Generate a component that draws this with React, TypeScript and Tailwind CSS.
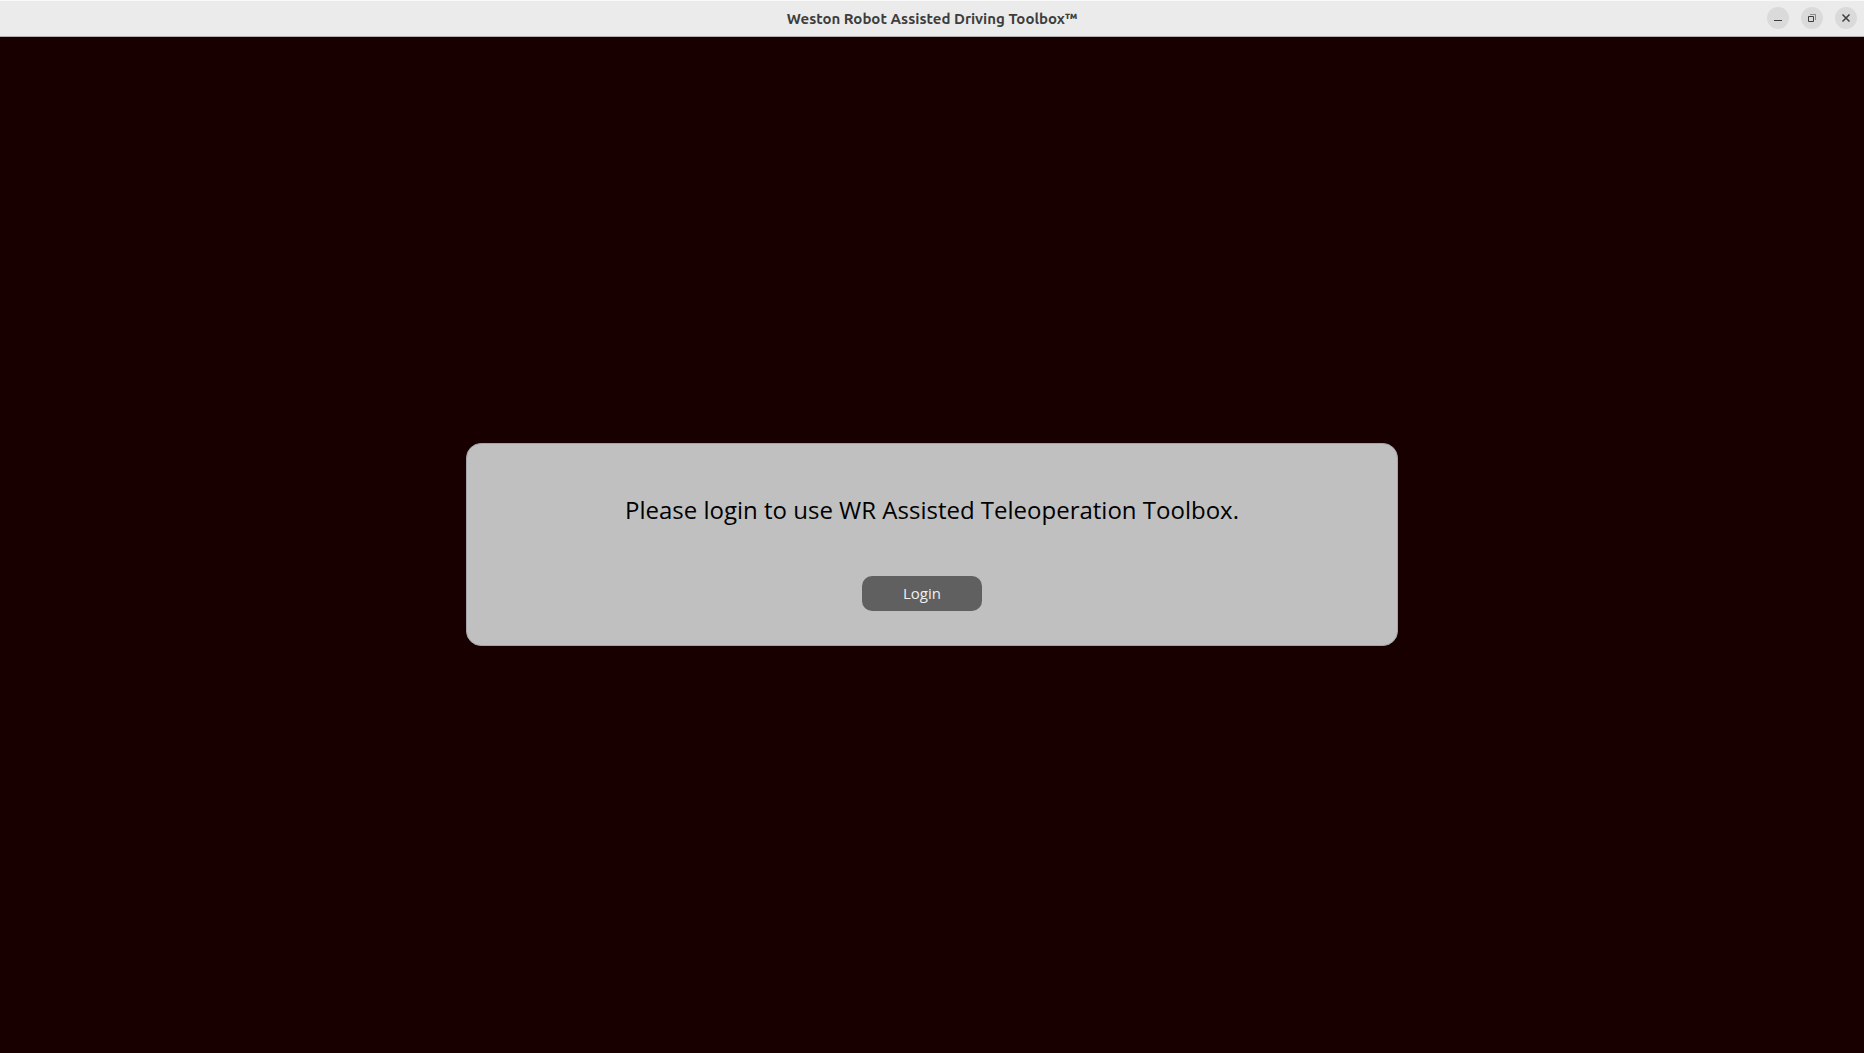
import React from "react";

type WindowButtonProps = { label: string; children: React.ReactNode };

function WindowButton({ label, children }: WindowButtonProps) {
  return (
    <button
      type="button"
      aria-label={label}
      className="flex size-[22px] items-center justify-center rounded-full bg-[#dadada] text-[#3d3d3d]"
    >
      <svg width="16" height="16" viewBox="0 0 16 16" fill="none" stroke="currentColor">
        {children}
      </svg>
    </button>
  );
}

function TitleBar() {
  return (
    <header className="grid h-[37px] shrink-0 grid-cols-[1fr_auto_1fr] items-start border-t border-b border-t-[#f9f9f9] border-b-[#b0b0b0] bg-[#ebebeb] px-[7px] pt-1.5">
      <h1 className="col-start-2 font-['Ubuntu','Noto_Sans',sans-serif] text-[15px] leading-6 font-bold text-[#3d3d3d]">
        Weston Robot Assisted Driving Toolbox™
      </h1>
      <div className="flex justify-end gap-3">
        <WindowButton label="Minimize">
          <path d="M4 10.5h8" />
        </WindowButton>
        <WindowButton label="Restore">
          <path d="M4.5 6.5h5v5h-5z" />
          <path d="M6 4.5h5.5V10" opacity="0.5" />
        </WindowButton>
        <WindowButton label="Close">
          <path d="M4.5 4.5l7 7M11.5 4.5l-7 7" strokeWidth="1.5" />
        </WindowButton>
      </div>
    </header>
  );
}

export default function App() {
  return (
    <div className="flex min-h-screen flex-col bg-[#190000]">
      <TitleBar />
      <main className="flex grow items-center justify-center pb-0.5 font-['Open_Sans','Noto_Sans',sans-serif]">
        <section className="flex w-1/2 flex-col items-center gap-[50px] rounded-[15px] border border-[#a3a3ad] bg-[#c0c0c0] pt-[50px] pb-[34px]">
          <p className="text-2xl leading-8 text-black">
            Please login to use WR Assisted Teleoperation Toolbox.
          </p>
          <button
            type="button"
            className="mr-5 h-[35px] w-[120px] rounded-[10px] bg-[#606060] text-[15px] leading-5 text-[#f0f0f0]"
          >
            Login
          </button>
        </section>
      </main>
    </div>
  );
}
